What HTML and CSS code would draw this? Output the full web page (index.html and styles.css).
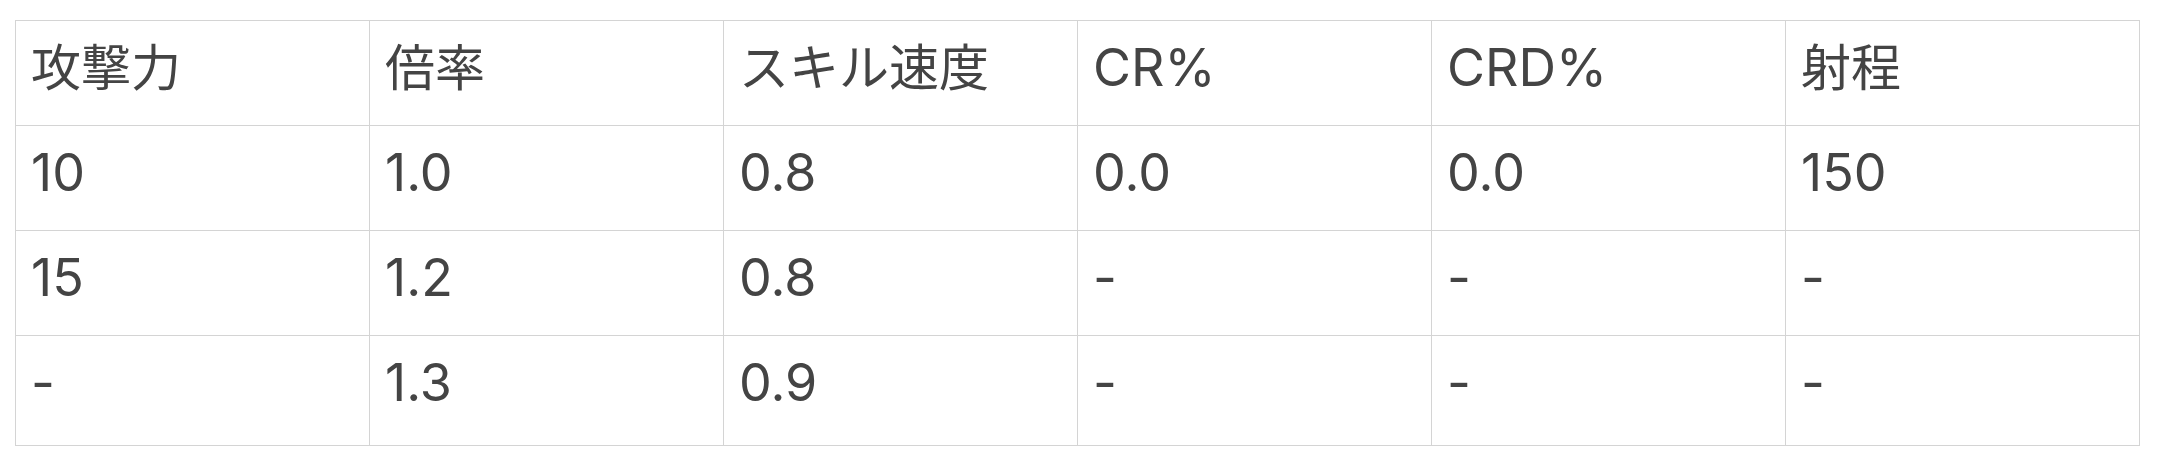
FILE: index.html
```html
<!DOCTYPE html>
<html lang="ja">
<head>
<meta charset="utf-8">
<link rel="stylesheet" href="styles.css">
</head>
<body>
<table class="stats">
  <thead>
    <tr><th><span class="ja">攻撃力</span></th><th><span class="ja">倍率</span></th><th><span class="ja">スキル速度</span></th><th>CR%</th><th>CRD%</th><th><span class="ja">射程</span></th></tr>
  </thead>
  <tbody>
    <tr><td>10</td><td>1.0</td><td>0.8</td><td>0.0</td><td>0.0</td><td>150</td></tr>
    <tr><td>15</td><td>1.2</td><td>0.8</td><td>-</td><td>-</td><td>-</td></tr>
    <tr class="last"><td>-</td><td>1.3</td><td>0.9</td><td>-</td><td>-</td><td>-</td></tr>
  </tbody>
</table>
</body>
</html>
```
FILE: styles.css
```css
html, body {
  margin: 0;
  padding: 0;
  background: #ffffff;
}
body {
  padding: 20px 0 0 15px;
}
.stats {
  border-collapse: collapse;
  table-layout: fixed;
  width: 2125px;
  font-family: Inter, "Noto Sans CJK JP", sans-serif;
  font-size: 52px;
  color: #444444;
}
.stats th, .stats td {
  border: 1px solid #d4d4d4;
  text-align: left;
  font-weight: normal;
  vertical-align: top;
  line-height: 64px;
  height: 64px;
  padding: 15px 15px 25px 15px;
}
.stats tr.last td {
  padding-bottom: 30px;
}
.ja {
  font-family: "Noto Sans CJK JP", sans-serif;
  font-size: 50px;
  line-height: 1;
}
```
